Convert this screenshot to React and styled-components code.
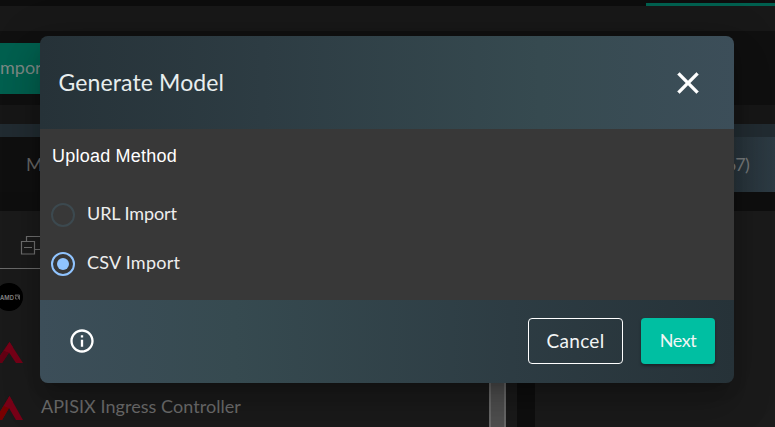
import React from "react";
import styled, { createGlobalStyle } from "styled-components";

const GlobalStyle = createGlobalStyle`
  * { box-sizing: border-box; }
  body { margin: 0; background: #101010; font-family: Lato, "Open Sans", sans-serif; }
  button { font: inherit; margin: 0; padding: 0; border: 0; background: none; }
`;

const Page = styled.div`
  position: relative;
  display: flex;
  flex-direction: column;
  width: 775px;
  height: 427px;
  overflow: hidden;
  background: #101010;
`;

const TabStrip = styled.div`
  display: flex;
  justify-content: flex-end;
  align-items: flex-end;
  flex: 0 0 6px;
  background: #0d0d0d;
`;

const ActiveIndicator = styled.div`
  width: 129px;
  height: 3px;
  background: #00604f;
`;

const Band = styled.div`
  flex: 0 0 ${(p) => p.$height}px;
  background: ${(p) => p.$color};
`;

const Toolbar = styled.div`
  display: flex;
  align-items: flex-start;
  flex: 0 0 74px;
  padding-top: 12px;
  background: #101010;
`;

const ImportButton = styled.button`
  width: 70px;
  height: 51px;
  padding-bottom: 3px;
  background: #00604f;
  color: #7d8a86;
  font-size: 18px;
  text-align: left;
`;

const Tabs = styled.div`
  display: grid;
  grid-template-columns: 517px 1fr;
  flex: 0 0 55px;
  line-height: 55px;
  font-size: 18px;
`;

const Tab = styled.div`
  padding: ${(p) => (p.$active ? "0 26px 0 0" : "0 0 0 26px")};
  text-align: ${(p) => (p.$active ? "right" : "left")};
  letter-spacing: ${(p) => (p.$active ? -0.8 : 0)}px;
  color: ${(p) => (p.$active ? "#777b7c" : "#666")};
  background: ${(p) => (p.$active ? "linear-gradient(90deg, #1c262b, #28343b 84%, #2d3b44)" : "#101010")};
`;

const Columns = styled.div`
  display: grid;
  grid-template-columns: 517px 1fr;
  column-gap: 18px;
  flex: 1;
  background: #0f0f0f;
`;

const Panel = styled.div`
  display: flex;
  background: #1b1b1b;
`;

const Tree = styled.div`
  width: 489px;
`;

const TreeHeader = styled.div`
  display: flex;
  height: 58px;
  padding: 24px 0 0 20px;
  border-bottom: 1px solid #6b6b6b;
`;

const TreeItem = styled.div`
  display: flex;
  align-items: center;
  height: ${(p) => p.$height}px;
  color: #707070;
  font-size: 18px;
  letter-spacing: 0.05px;
  white-space: nowrap;

  svg { flex: none; }
  span { margin: -4px 0 0 18px; }
`;

const Scrollbar = styled.div`
  width: 17px;
  background: #515151;
  border: solid #6b6b6b;
  border-width: 0 2px;
`;

const Overlay = styled.div`
  position: absolute;
  inset: 0;
  padding: 36px 41px 44px 40px;
`;

const Dialog = styled.div`
  display: grid;
  grid-template-rows: 93px 171px 83px;
  height: 347px;
  border-radius: 8px;
  overflow: hidden;
  color: #fff;
  box-shadow: 0 11px 15px -7px rgba(0, 0, 0, 0.2), 0 24px 38px 3px rgba(0, 0, 0, 0.14),
    0 9px 46px 8px rgba(0, 0, 0, 0.12);
`;

const DialogHeader = styled.div`
  display: flex;
  align-items: center;
  justify-content: space-between;
  padding: 0 28.5px 0 18.5px;
  background: linear-gradient(90deg, #263238, #2d3c43 32%, #364a50 72%, #3c4e59);
`;

const Title = styled.div`
  margin-top: -2px;
  font-size: 23px;
  letter-spacing: 0.12px;
  color: #e8eeee;
`;

const CloseButton = styled.button`
  display: flex;
`;

const DialogBody = styled.div`
  padding: 16px 12px 0;
  background: #383838;
`;

const Legend = styled.div`
  height: 45px;
  font: 18px/22px "Liberation Sans", Arial, sans-serif;
  letter-spacing: 0.22px;
`;

const RadioRow = styled.label`
  display: flex;
  align-items: center;
  height: 49px;
  margin-left: -1px;
  font-size: 18px;
  letter-spacing: ${(p) => p.$tracking}px;
  color: #eee;

  span { margin: -3px 0 0 12px; }
`;

const RadioMark = styled.div`
  display: flex;
  align-items: center;
  justify-content: center;
  width: 24px;
  height: 24px;
  border-radius: 50%;
  border: 2px solid ${(p) => (p.$checked ? "#90c4ff" : "#3c494f")};

  &::after {
    content: "";
    width: 12px;
    height: 12px;
    border-radius: 50%;
    background: ${(p) => (p.$checked ? "#90c4ff" : "transparent")};
  }
`;

const DialogFooter = styled.div`
  display: flex;
  align-items: center;
  padding: 0 19px 0 28px;
  background: linear-gradient(90deg, #3c4e59, #364a50 28%, #2d3c43 68%, #263238);

  > svg { margin-top: -2px; }
`;

const Actions = styled.div`
  display: flex;
  gap: 18px;
  margin: -1px 0 0 auto;
`;

const ActionButton = styled.button`
  width: ${(p) => (p.$primary ? 74 : 95)}px;
  height: 46px;
  padding-bottom: 2px;
  border-radius: 4px;
  border: ${(p) => (p.$primary ? "0" : "1px solid #fff")};
  background: ${(p) => (p.$primary ? "#00bfa2" : "transparent")};
  box-shadow: ${(p) => (p.$primary ? "0 2px 3px rgba(0, 0, 0, 0.35)" : "none")};
  color: #f2f5f5;
  font-size: ${(p) => (p.$primary ? 18 : 19)}px;
  letter-spacing: ${(p) => (p.$primary ? -0.4 : 0.3)}px;
`;

const CollapseIcon = () => (
  <svg width="24" height="24" fill="none" stroke="#707070" strokeWidth="1.2">
    <path d="M6.500 6V1.500H21v13h-6M1.500 6.500h13v12.500h-13zM4 12.500h8" />
  </svg>
);

const AmdIcon = () => (
  <svg width="23" height="28">
    <circle cx="9" cy="14" r="14" fill="#000" />
    <text x="0" y="16.500" fontSize="6.500" fontFamily="Inter" fontWeight="600" fill="#888" textLength="14" lengthAdjust="spacingAndGlyphs">AMD</text>
    <path d="M15 12h4.500v4.500l-1-1v-2.500h-3zM15.500 13.500v2.500h2" fill="none" stroke="#777" strokeWidth=".8" />
  </svg>
);

const PeakIcon = ({ large }) => (
  <svg width="23" height={large ? 24 : 21} viewBox="0 0 23 24" preserveAspectRatio="none">
    <path d="M9.500 0 23 24h-7L9 12 2 24h-7z" fill="#780018" />
    <path d="M9.500 0 4 10l5 2-7 12h-7z" fill={large ? "#780000" : "#640014"} />
    <path d="M9.500 0 4 10l5 2 4-6z" fill="#780018" />
  </svg>
);

const CloseIcon = () => (
  <svg width="36" height="36" viewBox="0 0 24 24" fill="#fff" stroke="#fff" strokeWidth=".35">
    <path d="M19 6.410 17.590 5 12 10.590 6.410 5 5 6.410 10.590 12 5 17.590 6.410 19 12 13.410 17.590 19 19 17.590 13.410 12z" />
  </svg>
);

const InfoIcon = () => (
  <svg width="28" height="28" viewBox="0 0 24 24" fill="#fff">
    <path d="M11 7h2v2h-2zm0 4h2v6h-2zm1-9C6.480 2 2 6.480 2 12s4.480 10 10 10 10-4.480 10-10S17.520 2 12 2m0 18c-4.410 0-8-3.590-8-8s3.590-8 8-8 8 3.590 8 8-3.590 8-8 8" />
  </svg>
);

export default function App() {
  return (
    <>
      <GlobalStyle />
      <Page>
        <TabStrip><ActiveIndicator /></TabStrip>
        <Band $height={25} $color="#181818" />
        <Toolbar><ImportButton>mport</ImportButton></Toolbar>
        <Band $height={19} $color="#171717" />
        <Band $height={13} $color="#222c32" />
        <Tabs>
          <Tab>M</Tab>
          <Tab $active>(67)</Tab>
        </Tabs>
        <Band $height={19} $color="#0f0f0f" />
        <Columns>
          <Panel>
            <Tree>
              <TreeHeader><CollapseIcon /></TreeHeader>
              <TreeItem $height={55}><AmdIcon /></TreeItem>
              <TreeItem $height={56}><PeakIcon /></TreeItem>
              <TreeItem $height={55}><PeakIcon large /><span>APISIX Ingress Controller</span></TreeItem>
            </Tree>
            <Scrollbar />
          </Panel>
          <Panel />
        </Columns>
        <Overlay>
          <Dialog role="dialog" aria-label="Generate Model">
            <DialogHeader>
              <Title>Generate Model</Title>
              <CloseButton aria-label="Close"><CloseIcon /></CloseButton>
            </DialogHeader>
            <DialogBody>
              <Legend>Upload Method</Legend>
              <RadioRow $tracking={-0.1}><RadioMark /><span>URL Import</span></RadioRow>
              <RadioRow $tracking={0.25}><RadioMark $checked /><span>CSV Import</span></RadioRow>
            </DialogBody>
            <DialogFooter>
              <InfoIcon />
              <Actions>
                <ActionButton>Cancel</ActionButton>
                <ActionButton $primary>Next</ActionButton>
              </Actions>
            </DialogFooter>
          </Dialog>
        </Overlay>
      </Page>
    </>
  );
}
